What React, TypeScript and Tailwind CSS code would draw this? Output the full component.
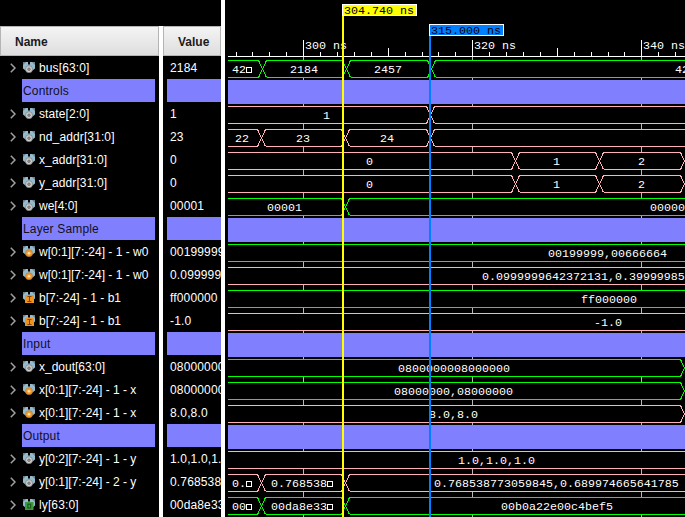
import React from "react";

type IconKind = "gray" | "orange" | "const" | "green";

interface Label {
  x: number;
  text: string;
  cut?: boolean;
}

interface Row {
  name: string;
  value?: string;
  icon?: IconKind;
  wide?: boolean;
  color?: string;
  edges?: number[];
  labels?: Label[];
}

const GREEN = "#00ff00";
const PINK = "#ffb0b8";
const LEFT = 228;
const RIGHT = 685;
const PITCH = 23;

const rows: Row[] = [
  {
    name: "bus[63:0]", value: "2184", icon: "gray", wide: true, color: GREEN, edges: [262.5, 346.5, 431.5],
    labels: [{ x: 232, text: "42", cut: true }, { x: 290, text: "2184" }, { x: 374, text: "2457" }, { x: 675, text: "42" }],
  },
  { name: "Controls" },
  { name: "state[2:0]", value: "1", icon: "gray", wide: true, color: PINK, edges: [430.5], labels: [{ x: 323, text: "1" }] },
  {
    name: "nd_addr[31:0]", value: "23", icon: "gray", wide: true, color: PINK, edges: [261.5, 345.5, 430.5],
    labels: [{ x: 235, text: "22" }, { x: 296, text: "23" }, { x: 380, text: "24" }],
  },
  {
    name: "x_addr[31:0]", value: "0", icon: "gray", wide: true, color: PINK, edges: [515.5, 599.5, 684.5],
    labels: [{ x: 366, text: "0" }, { x: 553, text: "1" }, { x: 638, text: "2" }],
  },
  {
    name: "y_addr[31:0]", value: "0", icon: "gray", wide: true, color: PINK, edges: [515.5, 599.5, 684.5],
    labels: [{ x: 366, text: "0" }, { x: 553, text: "1" }, { x: 638, text: "2" }],
  },
  {
    name: "we[4:0]", value: "00001", icon: "gray", color: GREEN, edges: [345.5],
    labels: [{ x: 267, text: "00001" }, { x: 650, text: "00000" }],
  },
  { name: "Layer Sample" },
  { name: "w[0:1][7:-24] - 1 - w0", value: "001999999", icon: "orange", color: GREEN, labels: [{ x: 548, text: "00199999,00666664" }] },
  { name: "w[0:1][7:-24] - 1 - w0", value: "0.0999999", icon: "orange", color: PINK, labels: [{ x: 482, text: "0.0999999642372131,0.39999985" }] },
  { name: "b[7:-24] - 1 - b1", value: "ff000000", icon: "const", color: GREEN, labels: [{ x: 581, text: "ff000000" }] },
  { name: "b[7:-24] - 1 - b1", value: "-1.0", icon: "const", color: PINK, labels: [{ x: 594, text: "-1.0" }] },
  { name: "Input" },
  { name: "x_dout[63:0]", value: "08000000", icon: "gray", color: GREEN, edges: [684.5], labels: [{ x: 398, text: "0800000008000000" }] },
  { name: "x[0:1][7:-24] - 1 - x", value: "08000000", icon: "orange", color: GREEN, edges: [684.5], labels: [{ x: 394, text: "08000000,08000000" }] },
  { name: "x[0:1][7:-24] - 1 - x", value: "8.0,8.0", icon: "orange", color: PINK, edges: [684.5], labels: [{ x: 429, text: "8.0,8.0" }] },
  { name: "Output" },
  { name: "y[0:2][7:-24] - 1 - y", value: "1.0,1.0,1.0", icon: "gray", color: PINK, labels: [{ x: 458, text: "1.0,1.0,1.0" }] },
  {
    name: "y[0:1][7:-24] - 2 - y", value: "0.768538", icon: "gray", color: PINK, edges: [261.5, 345.5],
    labels: [{ x: 232, text: "0.", cut: true }, { x: 271, text: "0.768538", cut: true }, { x: 434, text: "0.768538773059845,0.689974665641785" }],
  },
  {
    name: "ly[63:0]", value: "00da8e33", icon: "green", wide: true, color: GREEN, edges: [261.5, 345.5],
    labels: [{ x: 232, text: "00", cut: true }, { x: 271, text: "00da8e33", cut: true }, { x: 501, text: "00b0a22e00c4bef5" }],
  },
];

function Chevron() {
  return (
    <svg className="ml-2.5 h-[10px] w-[6px] shrink-0" viewBox="0 0 6 10" fill="none">
      <path d="M0.8 0.8L5 5L0.8 9.2" stroke="#a0a0a0" strokeWidth="1.5" />
    </svg>
  );
}

function SignalIcon({ kind }: { kind: IconKind }) {
  return (
    <svg className="ml-[7px] h-[11px] w-[12px] shrink-0" viewBox="0 0 12 11">
      <path d="M0 0H5V2.5H7V0H12V6.5L9.5 8.5H2.5L0 6.5Z" fill="#93bacd" />
      <path d="M0 0H3L0 3ZM12 0H9L12 3Z" fill="#6a7f8a" />
      {(kind === "gray" || kind === "orange") && (
        <>
          <circle cx="6" cy="7.2" r="3.5" fill={kind === "gray" ? "#cfcfcf" : "#f39a2e"} stroke={kind === "gray" ? "#707070" : "#b8731f"} strokeWidth="0.6" />
          <circle cx="6" cy="7.2" r="1.3" fill={kind === "gray" ? "#9a9a9a" : "#ffe2b0"} stroke={kind === "gray" ? "#555" : "none"} strokeWidth="0.6" />
        </>
      )}
      {kind === "const" && (
        <>
          <rect x="2" y="3" width="9" height="8" fill="#ee9322" />
          <path d="M4.5 4.5H8.5M6.5 4.5V9.5M4.5 9.5H8.5" stroke="#7a4308" strokeWidth="1" fill="none" />
        </>
      )}
      {kind === "green" && (
        <>
          <rect x="2" y="3" width="8.5" height="8" fill="#3c9a3c" />
          <rect x="4.9" y="5.2" width="2.8" height="3.8" fill="none" stroke="#15521a" strokeWidth="1" />
        </>
      )}
    </svg>
  );
}

/* Bus outline: two rails that swap over at every transition. */
function busPath(top: number, edges: number[]): string {
  const a = top + 0.5;
  const b = top + 17.5;
  let upper = `M${LEFT} ${a}`;
  let lower = `M${LEFT} ${b}`;
  edges.forEach((e) => {
    upper += `H${e - 4}L${e + 4} ${b}M${e + 4} ${a}`;
    lower += `H${e - 4}L${e + 4} ${a}M${e + 4} ${b}`;
  });
  return `${upper}H${RIGHT}${lower}H${RIGHT}`;
}

const minorTicks = [236, 252, 269, 286, 320, 337, 354, 371, 405, 422, 438, 455, 489, 506, 523, 540, 574, 591, 608, 624, 658, 675];
const majorTicks = [
  { x: 303, text: "300 ns" },
  { x: 472, text: "320 ns" },
  { x: 641, text: "340 ns" },
];

function Cursor({ x, y, color, text }: { x: number; y: number; color: string; text: string }) {
  return (
    <g>
      <rect x={x} y={y + 12} width="2" height={517 - y - 12} fill={color} />
      <rect x={x + 0.5} y={y + 0.5} width="74" height="11" fill={color} stroke="#fff" />
      <text x={x + 2} y={y + 10} fill="#000">{text}</text>
    </g>
  );
}

function Waveform() {
  return (
    <svg
      className="block h-[517px] w-[460px] shrink-0 bg-black font-['Liberation_Mono',monospace] text-[11.667px]"
      viewBox="225 0 460 517"
    >
      <rect x={LEFT} y="56" width="457" height="1" fill="#fff" />
      {minorTicks.map((x) => <rect key={x} x={x} y="52" width="1" height="4" fill="#fff" />)}
      {[388, 557].map((x) => <rect key={x} x={x} y="48" width="1" height="8" fill="#fff" />)}
      {majorTicks.map((t) => (
        <g key={t.x}>
          <rect x={t.x} y="40" width="1" height="17" fill="#fff" />
          <rect x={t.x} y="57" width="1" height="460" fill="#b8b8b8" />
          <text x={t.x + 2} y="49" fill="#fff">{t.text}</text>
        </g>
      ))}
      {rows.map((row, i) => {
        const top = 60 + i * PITCH;
        if (!row.color) {
          return <rect key={i} x={LEFT} y={top - 3} width="457" height="24" fill="#8080ff" />;
        }
        return (
          <g key={i}>
            <rect x={LEFT} y={top} width="457" height="18" fill="#000" />
            <path d={busPath(top, row.edges ?? [])} fill="none" stroke={row.color} strokeWidth="1" shapeRendering="crispEdges" />
            {row.labels?.map((l) => (
              <g key={l.x}>
                <text x={l.x} y={top + 13} fill="#fff">{l.text}</text>
                {l.cut && <rect x={l.x + l.text.length * 7 + 0.5} y={top + 7.5} width="5" height="5" fill="none" stroke="#fff" />}
              </g>
            ))}
          </g>
        );
      })}
      <Cursor x={342} y={4} color="#ffff00" text="304.740 ns" />
      <Cursor x={429} y={24} color="#0080ff" text="315.000 ns" />
    </svg>
  );
}

const headerCell =
  "flex h-[30px] items-center border border-[#b4b4b4] bg-linear-to-b from-[#f4f4f4] to-[#dededf] pt-0.5 pl-3.5 font-bold text-[#1a1a1a]";

export default function App() {
  return (
    <div className="flex h-[517px] w-[685px] overflow-hidden bg-black font-['Liberation_Sans',Arial,sans-serif] text-[12px] leading-[23px] text-white">
      <div className="flex w-[221px] shrink-0 pt-[26px]">
        <div className="w-[159px] shrink-0">
          <div className={headerCell}>Name</div>
          {rows.map((row, i) =>
            row.icon ? (
              <div key={i} className="flex h-[23px] items-center whitespace-pre">
                <Chevron />
                <SignalIcon kind={row.icon} />
                <span className={row.wide ? "ml-1 pt-0.5 tracking-[0.12px]" : "ml-1 pt-0.5"}>{row.name}</span>
              </div>
            ) : (
              <div key={i} className="mr-1 ml-[22px] h-[23px] bg-[#8080ff] pl-px leading-[25px] tracking-[0.15px] text-[#101020]">
                {row.name}
              </div>
            )
          )}
        </div>
        <div className="w-1 shrink-0 bg-white" />
        <div className="w-[58px] shrink-0 overflow-hidden">
          <div className={headerCell}>Value</div>
          {rows.map((row, i) =>
            row.icon ? (
              <div key={i} className="h-[23px] overflow-hidden pl-[7px] leading-[25px] tracking-[0.15px] whitespace-pre">{row.value}</div>
            ) : (
              <div key={i} className="ml-1 h-[23px] bg-[#8080ff]" />
            )
          )}
        </div>
      </div>
      <div className="w-1 shrink-0 bg-white" />
      <Waveform />
    </div>
  );
}
